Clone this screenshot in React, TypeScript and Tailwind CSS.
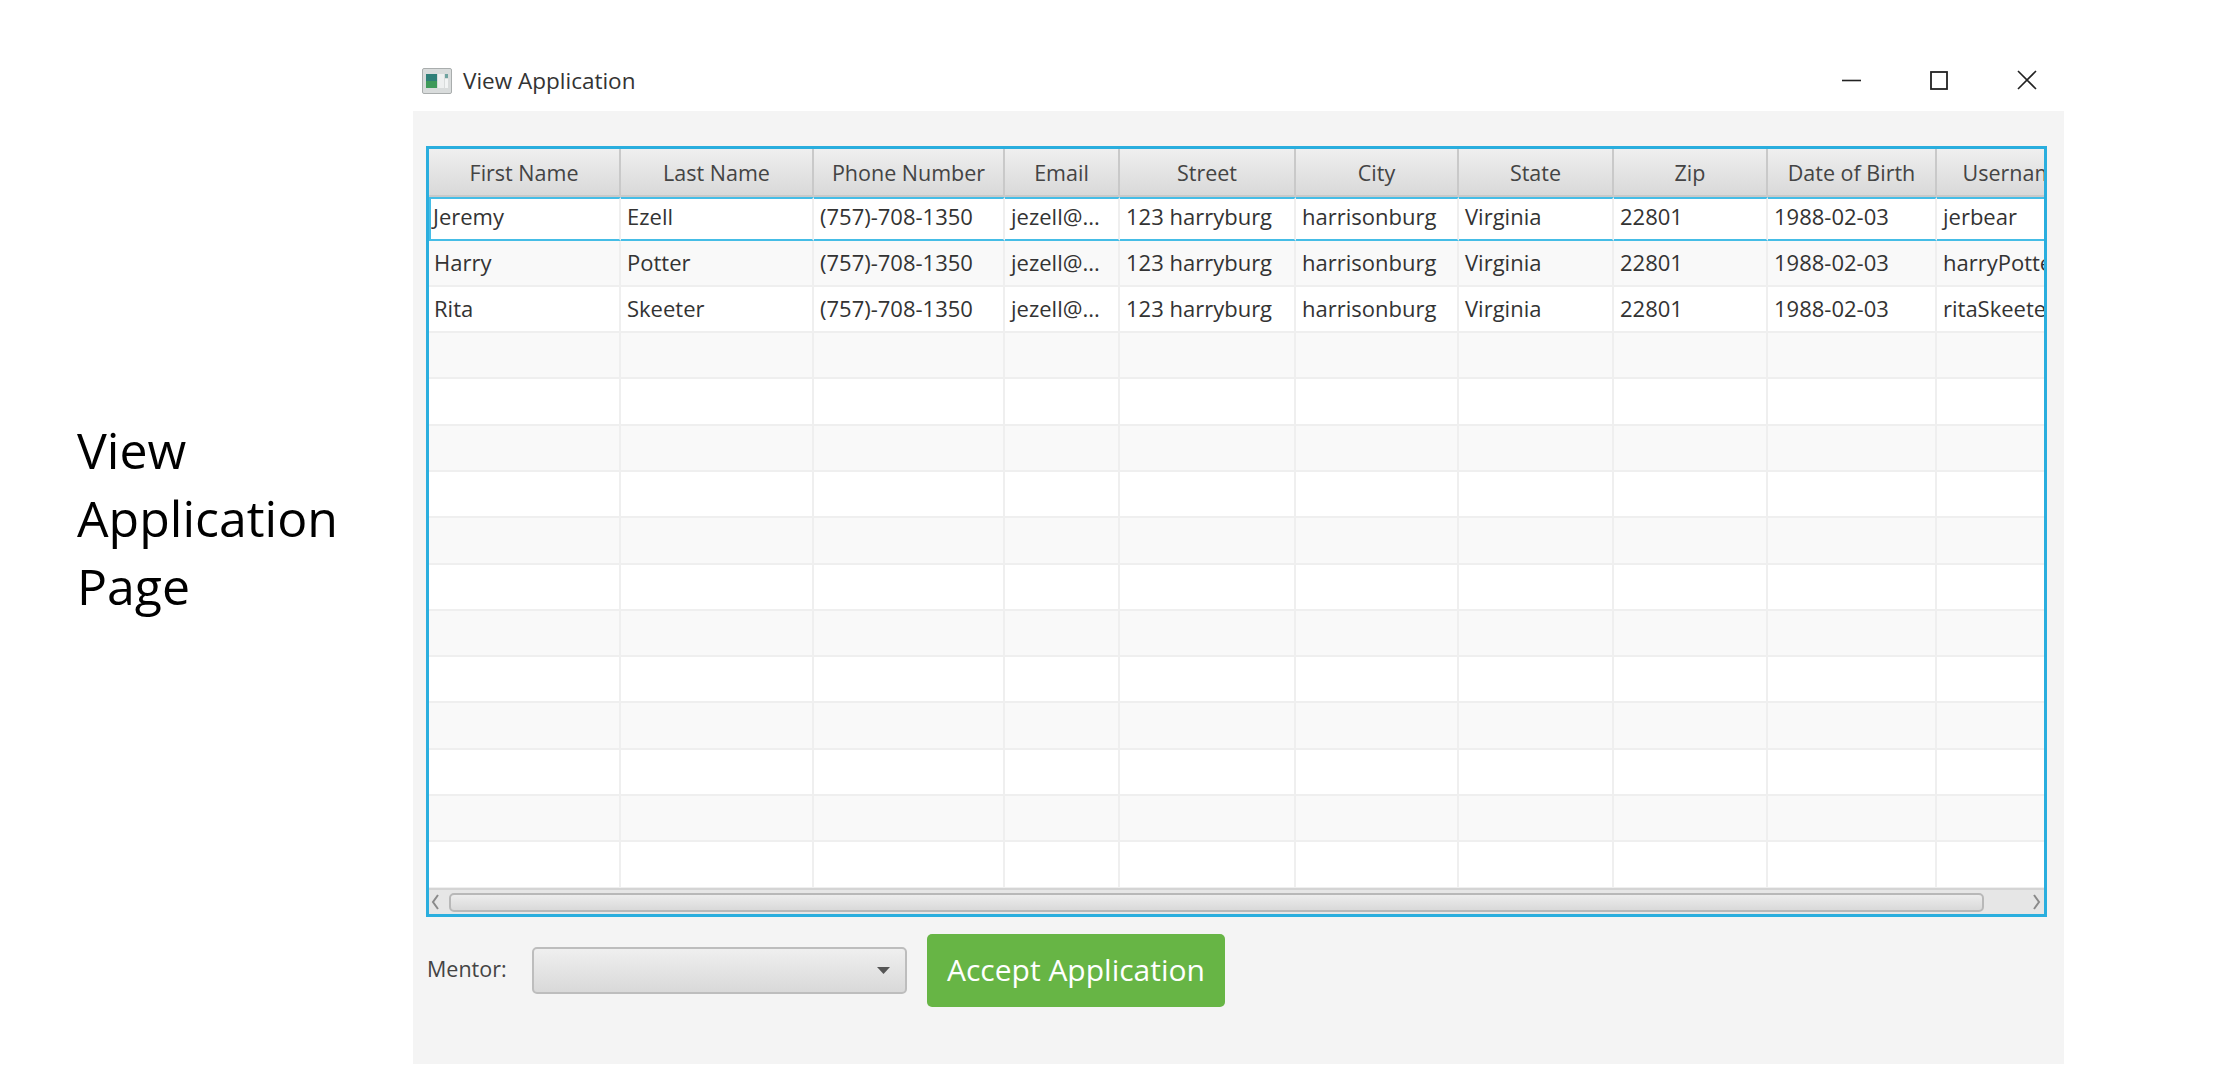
const COLUMNS = ['First Name', 'Last Name', 'Phone Number', 'Email', 'Street', 'City', 'State', 'Zip', 'Date of Birth', 'Username'];

const PEOPLE = [
  ['Jeremy', 'Ezell', 'jerbear'],
  ['Harry', 'Potter', 'harryPotter'],
  ['Rita', 'Skeeter', 'ritaSkeeter'],
];

const GRID = 'grid grid-cols-[192px_193px_191px_115px_176px_163px_155px_154px_169px_157px] w-[1665px]';
const ALL_ROWS = Array.from({ length: 15 }, (_, i) => i);

function cellsFor(rowIndex: number) {
  const person = PEOPLE[rowIndex];
  if (!person) return COLUMNS.map(() => '');
  return [person[0], person[1], '(757)-708-1350', 'jezell@...', '123 harryburg', 'harrisonburg', 'Virginia', '22801', '1988-02-03', person[2]];
}

function cellPadding(selected: boolean, column: number) {
  if (column > 0) return 'pl-[6px]';
  return selected ? 'pl-[2px] border-l-[2px] border-l-[#45bde6]' : 'pl-[5px]';
}

function AppIcon() {
  return (
    <svg width="30" height="26" viewBox="0 0 30 26" className="shrink-0">
      <rect x="0.5" y="0.5" width="29" height="25" rx="1.5" fill="#d9dcdc" stroke="#a9adad" />
      <rect x="4" y="6" width="11" height="14" fill="#2f7f78" />
      <rect x="4" y="13" width="11" height="7" fill="#3f9a5a" />
      <rect x="16" y="6" width="6" height="14" fill="#eef0f0" />
      <rect x="23" y="6" width="3" height="4" fill="#6fa3a0" />
      <rect x="23" y="11" width="3" height="9" fill="#f2f4f4" />
    </svg>
  );
}

function WindowControls() {
  return (
    <div className="flex items-center gap-[69px] pr-[27px]">
      <svg width="19" height="18" viewBox="0 0 19 18"><path d="M0 9.5h19" stroke="#222" strokeWidth="1.6" /></svg>
      <svg width="18" height="19" viewBox="0 0 18 19"><rect x="1" y="1" width="16" height="17" fill="none" stroke="#222" strokeWidth="1.8" /></svg>
      <svg width="20" height="20" viewBox="0 0 20 20"><path d="M1 1l18 18M19 1L1 19" stroke="#222" strokeWidth="1.6" /></svg>
    </div>
  );
}

function Table() {
  return (
    <div className="h-[771px] border-[3px] border-[#2aaede] bg-white flex flex-col overflow-hidden">
      <div className="overflow-hidden shrink-0">
        <div className={`${GRID} h-[48px]`}>
          {COLUMNS.map((name) => (
            <div
              key={name}
              className="flex items-center justify-center pt-[3px] bg-linear-to-b from-[#efefef] to-[#d9d9d9] border-r-2 border-b-2 border-[#c9c9c9] text-[21.5px] text-[#444] whitespace-nowrap overflow-hidden"
            >
              {name}
            </div>
          ))}
        </div>
      </div>
      <div className="flex-1 overflow-hidden">
        {ALL_ROWS.map((rowIndex) => {
          const selected = rowIndex === 0;
          return (
            <div
              key={rowIndex}
              className={`${GRID} ${selected ? 'h-[43.5px]' : 'h-[46.3px]'} ${rowIndex % 2 === 0 ? 'bg-white' : 'bg-[#f9f9f9]'}`}
            >
              {cellsFor(rowIndex).map((text, i) => (
                <div
                  key={i}
                  className={`flex items-center text-[22px] text-[#333] whitespace-nowrap overflow-hidden border-r-2 border-[#efefef] ${
                    selected ? 'pb-[4px] border-y-2 border-y-[#45bde6]' : 'border-b-2 border-b-[#efefef]'
                  } ${cellPadding(selected, i)}`}
                >
                  {text}
                </div>
              ))}
            </div>
          );
        })}
      </div>
      <div className="h-[26px] shrink-0 flex items-center bg-[#e6e6e6] border-t-2 border-[#d4d4d4]">
        <svg width="20" height="18" viewBox="0 0 20 18" className="shrink-0">
          <path d="M9 2L4 9l5 7" fill="none" stroke="#8a8a8a" strokeWidth="2" />
        </svg>
        <div className="w-[1535px] h-[19px] rounded-[5px] border-2 border-[#b8b8b8] bg-linear-to-b from-[#ededed] to-[#d9d9d9]" />
        <div className="flex-1 flex justify-end">
          <svg width="20" height="18" viewBox="0 0 20 18">
            <path d="M10 2l5 7-5 7" fill="none" stroke="#8a8a8a" strokeWidth="2" />
          </svg>
        </div>
      </div>
    </div>
  );
}

export default function App() {
  return (
    <div className="w-[2224px] h-[1084px] bg-white flex font-['Open_Sans',sans-serif] overflow-hidden">
      <div className="w-[413px] shrink-0 pl-[77px] pt-[416px] text-[50px] leading-[68px] text-black">
        View
        <br />
        Application
        <br />
        Page
      </div>
      <div className="w-[1651px] shrink-0 pt-[63px] flex flex-col">
        <div className="h-[48px] flex items-start justify-between">
          <div className="flex items-center gap-[11px] pl-[9px] pt-[1px] text-[22.5px] text-[#333]">
            <AppIcon />
            <span>View Application</span>
          </div>
          <div className="pt-[7px]">
            <WindowControls />
          </div>
        </div>
        <div className="h-[953px] bg-[#f4f4f4] pt-[35px] pl-[13px] pr-[17px]">
          <Table />
          <div className="flex items-center mt-[17px]">
            <span className="w-[106px] pl-px pb-[2px] text-[21.5px] text-[#444]">Mentor:</span>
            <div className="w-[375px] h-[47px] rounded-[5px] border-2 border-[#bdbdbd] bg-linear-to-b from-[#efefef] to-[#d9d9d9] flex items-center justify-end pr-[15px]">
              <svg width="13" height="7" viewBox="0 0 13 7"><path d="M0 0h13L6.5 7z" fill="#555" /></svg>
            </div>
            <button className="ml-[20px] w-[298px] h-[73px] pb-[2px] rounded-[5px] bg-[#67b545] text-white text-[30px]">
              Accept Application
            </button>
          </div>
        </div>
      </div>
    </div>
  );
}
